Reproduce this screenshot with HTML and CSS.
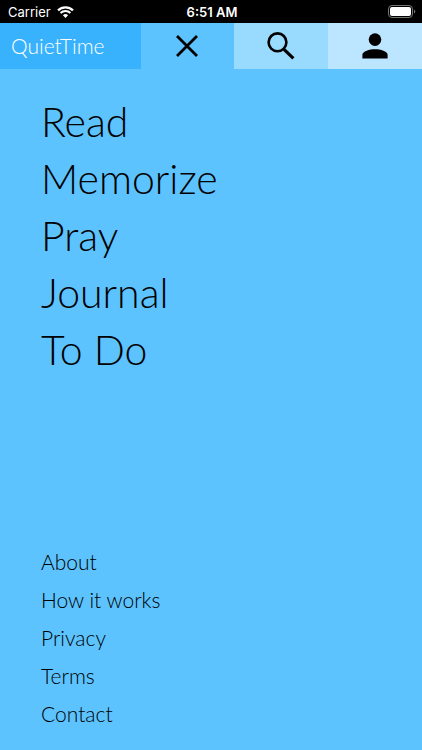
FILE: index.html
```html
<!DOCTYPE html>
<html lang="en">
<head>
    <meta charset="UTF-8">
    <meta name="viewport" content="width=device-width, initial-scale=1.0">
    <title>QuietTime</title>
    <link rel="stylesheet" href="styles.css">
</head>
<body>
    <!-- Device status bar -->
    <div class="status-bar">
        <div class="status-carrier">
            <span>Carrier</span>
            <svg class="wifi-icon" viewBox="0 0 17 12" aria-hidden="true">
                <path d="M1 4.4a10.6 10.6 0 0 1 15 0" fill="none" stroke="#fff" stroke-width="2.3"/>
                <path d="M3.6 7.1a6.9 6.9 0 0 1 9.8 0" fill="none" stroke="#fff" stroke-width="2.1"/>
                <path d="M8.5 12L5.9 9.3a3.7 3.7 0 0 1 5.2 0z" fill="#fff"/>
            </svg>
        </div>
        <div class="status-time">6:51 AM</div>
        <div class="status-battery">
            <svg class="battery-icon" viewBox="0 0 28 14" aria-hidden="true">
                <rect x="0.5" y="0.5" width="24" height="12" rx="3.5" fill="none" stroke="#777"/>
                <rect x="2" y="2" width="21" height="9" rx="2" fill="#fff"/>
                <path d="M26 4.5v4a2.2 2.2 0 0 0 0-4z" fill="#777"/>
            </svg>
        </div>
    </div>

    <header class="top-bar">
        <a class="brand" href="#">QuietTime</a>
        <button class="tab tab-close" type="button" aria-label="Close menu">
            <svg viewBox="0 0 28 28" aria-hidden="true">
                <path d="M4 4l20 20M24 4L4 24" fill="none" stroke="#000" stroke-width="2.8"/>
            </svg>
        </button>
        <button class="tab tab-search" type="button" aria-label="Search">
            <svg viewBox="0 0 28 28" aria-hidden="true">
                <circle cx="10.5" cy="10.3" r="8.9" fill="none" stroke="#000" stroke-width="2.6"/>
                <path d="M17 17.4l9.4 9" fill="none" stroke="#000" stroke-width="3.2"/>
            </svg>
        </button>
        <button class="tab tab-profile" type="button" aria-label="Profile">
            <svg class="profile-icon" viewBox="0 0 26 26" aria-hidden="true">
                <circle cx="13" cy="6.6" r="6.3"/>
                <path d="M0.4 25.6v-3.8c0-3.6 7-5.6 12.6-5.6s12.6 2 12.6 5.6v3.8z"/>
            </svg>
        </button>
    </header>

    <main class="menu">
        <nav class="menu-main" aria-label="Main">
            <a href="#">Read</a>
            <a href="#">Memorize</a>
            <a href="#">Pray</a>
            <a href="#">Journal</a>
            <a href="#">To Do</a>
        </nav>
        <nav class="menu-info" aria-label="Information">
            <a href="#">About</a>
            <a href="#">How it works</a>
            <a href="#">Privacy</a>
            <a href="#">Terms</a>
            <a href="#">Contact</a>
        </nav>
    </main>
</body>
</html>
```
FILE: styles.css
```css
:root {
    --blue: #5CC3FF;
    --blue-dark: #38B2FD;
    --blue-light: #99DAFF;
    --blue-pale: #BCE6FF;
}

* {
    box-sizing: border-box;
}

body {
    font-family: Lato, 'Open Sans', sans-serif;
    font-weight: 300;
    background-color: var(--blue);
    color: #000;
    margin: 0;
    min-height: 100vh;
    display: flex;
    flex-direction: column;
}

a {
    color: inherit;
    text-decoration: none;
}

.status-bar {
    display: grid;
    grid-template-columns: 1fr auto 1fr;
    align-items: center;
    height: 23px;
    padding: 0 6px 0 8px;
    background-color: #000;
    color: #fff;
    font-family: Inter, sans-serif;
    font-size: 13px;
    font-weight: 400;
}

.status-carrier {
    display: flex;
    align-items: center;
    gap: 6px;
}

.wifi-icon {
    width: 17px;
    height: 12px;
}

.status-time {
    font-weight: 600;
}

.status-battery {
    display: flex;
    justify-content: flex-end;
}

.battery-icon {
    width: 28px;
    height: 14px;
}

.top-bar {
    display: grid;
    grid-template-columns: 3fr 2fr 2fr 2fr;
    height: 46px;
}

.brand {
    display: flex;
    align-items: center;
    padding: 0 0 2px 11px;
    background-color: var(--blue-dark);
    color: #fff;
    font-size: 21px;
}

.tab {
    display: flex;
    align-items: center;
    justify-content: center;
    padding: 0 1px 1px 0;
    border: none;
    background-color: var(--blue);
    cursor: pointer;
}

.tab svg {
    width: 28px;
    height: 28px;
}

.tab .profile-icon {
    width: 26px;
    height: 26px;
}

.tab-search {
    background-color: var(--blue-light);
}

.tab-profile {
    background-color: var(--blue-pale);
}

.menu {
    flex: 1;
    display: flex;
    flex-direction: column;
    justify-content: space-between;
    padding: 24px 41px;
}

.menu-main,
.menu-info {
    display: flex;
    flex-direction: column;
    align-items: flex-start;
}

.menu-main {
    font-size: 41px;
    line-height: 57px;
}

.menu-info {
    font-size: 21px;
    line-height: 24px;
    gap: 14px;
}
```
